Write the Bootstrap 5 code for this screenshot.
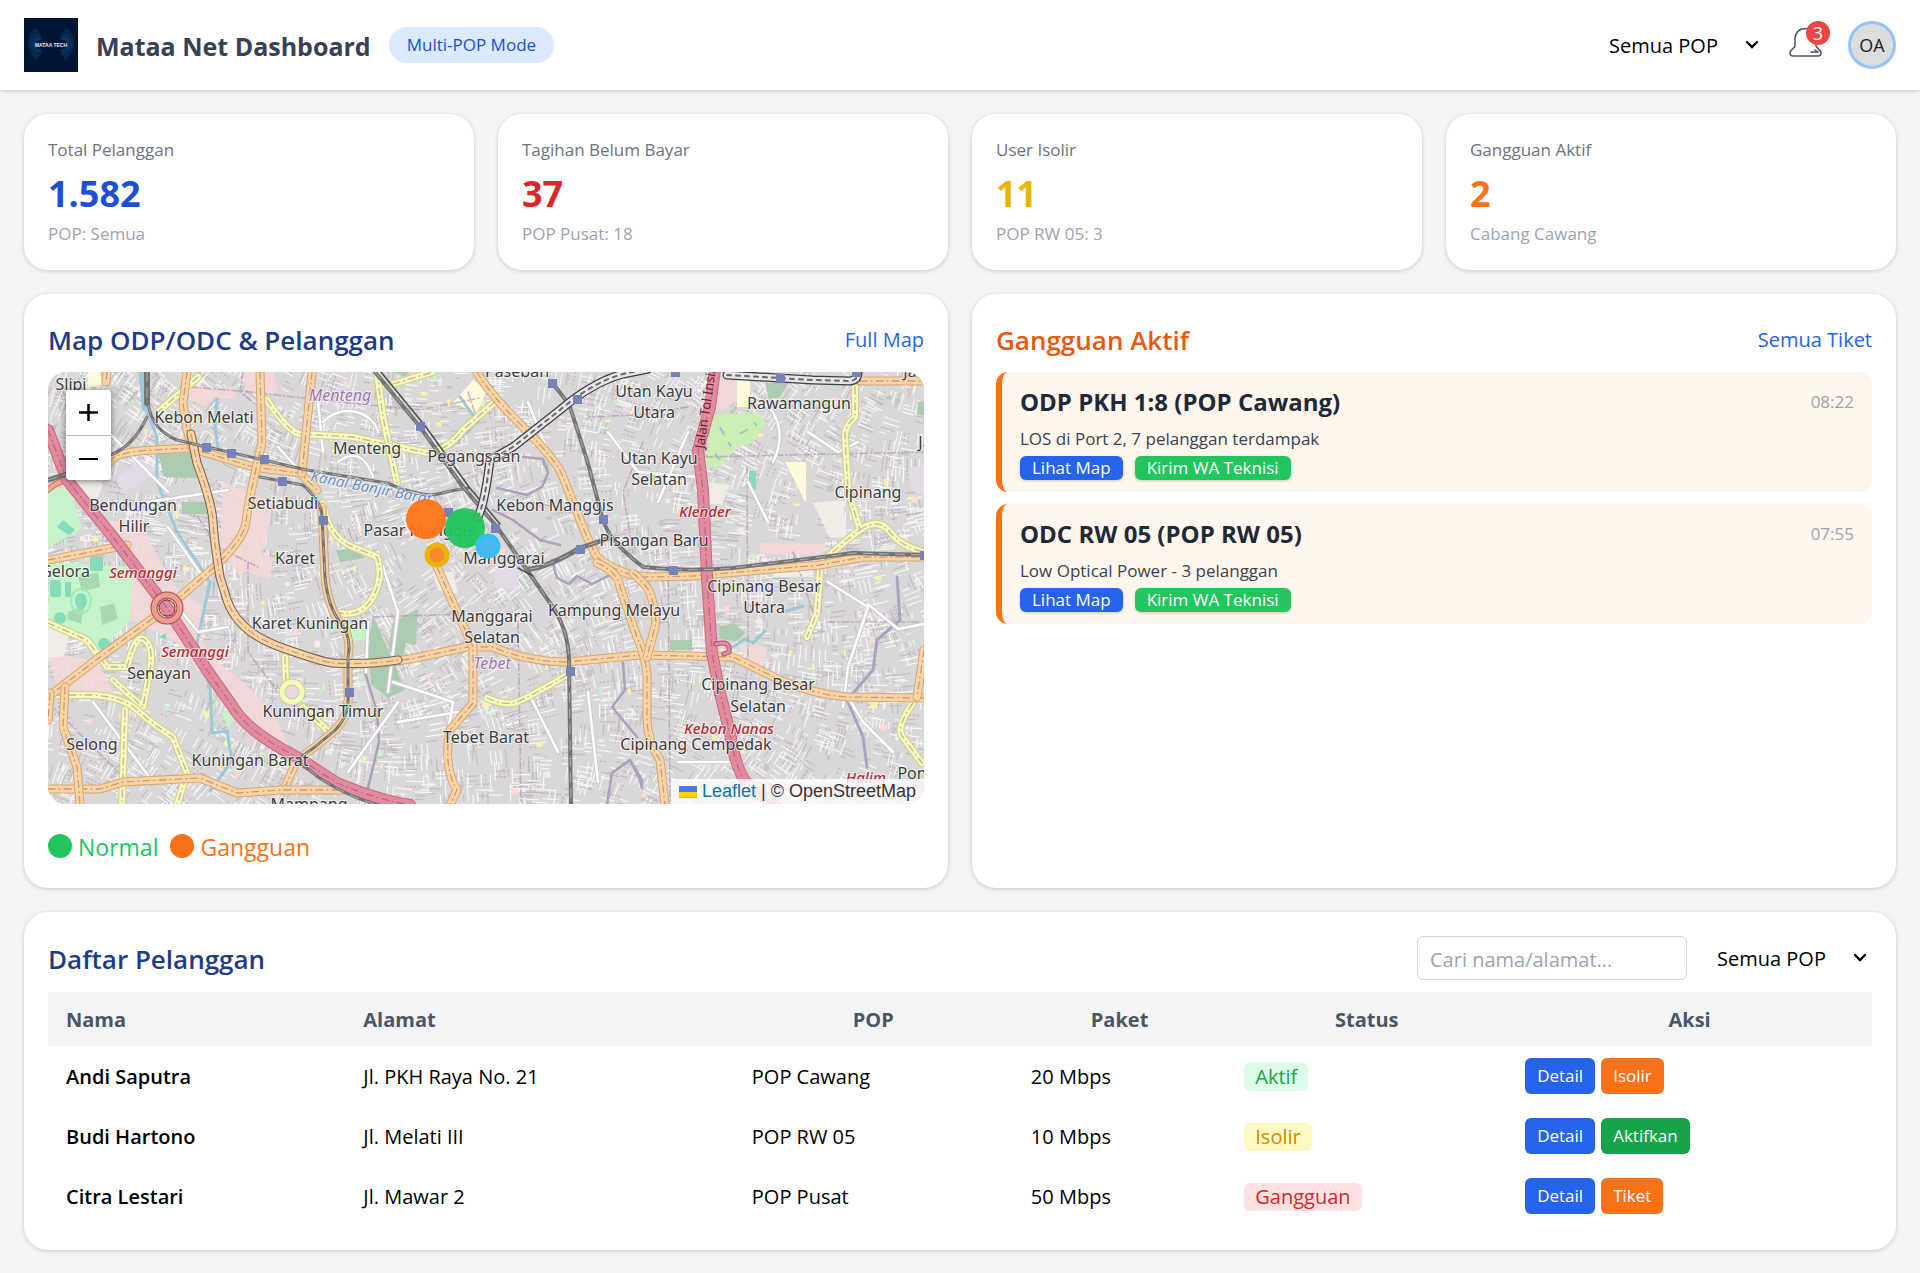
<!DOCTYPE html>
<html lang="id">
<head>
<meta charset="utf-8">
<meta name="viewport" content="width=device-width, initial-scale=1">
<title>Mataa Net Dashboard</title>
<link href="https://cdn.jsdelivr.net/npm/bootstrap@5.3.0/dist/css/bootstrap.min.css" rel="stylesheet">
<style>
  body { background: #f3f4f6; color: #000; font-family: "Open Sans", "Noto Sans", sans-serif; font-size: 20px; line-height: 30px; }
  .topbar { background: #fff; box-shadow: 0 1px 4px rgba(0,0,0,.2); padding: 18px 24px; min-height: 90px; position: relative; }
  .brand { gap: 18px; }
  .brand-title { font-size: 25px; font-weight: 700; line-height: 36px; color: #374151; padding-top: 2px; }
  .mode-pill { background: #dbeafe; color: #1d4ed8; font-size: 17px; line-height: 24px; padding: 6px 18px; border-radius: 18px; }
  .pop-select { appearance: none; border: 0; width: 173px; height: 44px; padding: 2px 30px 0 18px; color: #000; border-radius: 6px; font-size: 20px;
    background: transparent url("data:image/svg+xml,%3Csvg xmlns='http://www.w3.org/2000/svg' viewBox='0 0 14 10'%3E%3Cpath d='M2 2l5 5 5-5' fill='none' stroke='%23000' stroke-width='2.4' stroke-linecap='round'/%3E%3C/svg%3E") no-repeat right 5px center / 14px 10px; }
  .bell-btn { border: 0; background: none; padding: 0; width: 36px; height: 36px; position: relative; }
  .bell-btn svg { display: block; }
  .bell-count { position: absolute; top: -6px; right: -6px; width: 24px; height: 24px; border-radius: 50%; background: #ef4444; color: #fff; font-size: 18px; line-height: 25px; text-align: center; }
  .avatar { width: 48px; height: 48px; border: 3px solid #93c5fd; border-radius: 50%; background: #ddd; color: #222; font-size: 18px; line-height: 42px; text-align: center; }
  .page-main { padding: 24px; display: grid; gap: 24px; }
  .panel { background: #fff; border-radius: 24px; box-shadow: 0 1px 4px rgba(0,0,0,.18); padding: 24px; }
  .stats { --bs-gutter-x: 24px; --bs-gutter-y: 24px; }
  .stat-label, .stat-note { font-size: 17px; line-height: 24px; color: #6b7280; }
  .stat-note { color: #9ca3af; }
  .stat-value { font-size: 36px; line-height: 48px; font-weight: 700; margin: 8px 0 4px; }
  .panel-head { margin-bottom: 12px; }
  .panel-title { font-size: 26px; line-height: 40px; font-weight: 600; margin: 0; padding-top: 2px; }
  .panel-link { color: #2563eb; text-decoration: none; padding-top: 2px; }
  .c-navy { color: #1e3a8a; } .c-blue { color: #1d4ed8; } .c-red { color: #dc2626; } .c-yellow { color: #eab308; } .c-orange { color: #f97316; } .c-rust { color: #ea580c; } .c-green { color: #22c55e; }
  .map-box { position: relative; height: 432px; border-radius: 18px; overflow: hidden; background: #ddd; }
  .map-box > svg { display: block; width: 100%; height: 100%; }
  .zoom-ctl { position: absolute; left: 18px; top: 18px; width: 45px; border-radius: 4px; overflow: hidden; box-shadow: 0 1px 7px rgba(0,0,0,.5); }
  .zoom-ctl button { display: block; width: 45px; height: 45px; border: 0; padding: 13px; background: #fff; }
  .zoom-ctl button + button { border-top: 1px solid #bbb; }
  .zoom-ctl svg { display: block; }
  .attrib { position: absolute; right: 0; bottom: 0; background: rgba(255,255,255,.8); padding: 0 8px; font: 18px/25px "Liberation Sans", sans-serif; color: #333; }
  .attrib a { color: #0078a8; text-decoration: none; }
  .legend { font-size: 23px; line-height: 36px; gap: 12px; }
  .legend-name { padding-top: 2px; line-height: 34px; }
  .dot { width: 24px; height: 24px; border-radius: 50%; background: currentColor; margin: 0 6px 0 0; }
  .ticket-list, .tools { gap: 12px; }
  .ticket { background: #fff7ed; border-left: 6px solid #f97316; border-radius: 12px; padding: 12px 18px; }
  .ticket-title { font-size: 24px; line-height: 36px; font-weight: 700; color: #1f2937; margin: 0; }
  .ticket-text { font-size: 17px; line-height: 34px; padding-top: 2px; color: #374151; }
  .ticket-time { font-size: 17px; line-height: 36px; color: #9ca3af; }
  .tag-btn { border: 0; border-radius: 6px; color: #fff; font-size: 17px; line-height: 24px; padding: 0 12px; box-shadow: 0 1px 3px rgba(0,0,0,.2); }
  .act-btn { border: 0; border-radius: 6px; color: #fff; font-size: 17px; line-height: 24px; padding: 6px 12px; }
  .b-blue { background: #2563eb; } .b-green { background: #22c55e; } .b-orange { background: #f97316; } .b-leaf { background: #16a34a; }
  .search-box { width: 270px; height: 44px; border: 1px solid #d1d5db; border-radius: 6px; padding: 2px 12px 0; font-size: 20px; }
  .search-box::placeholder { color: #9ca3af; }
  .cust { width: 100%; table-layout: fixed; }
  .cust th { background: #f3f4f6; color: #4b5563; font-weight: 700; height: 54px; padding: 2px 18px 0; }
  .cust td { height: 60px; padding: 2px 18px 0; }
  .cust td.td-acts { padding-top: 0; }
  .cust .w1 { width: 16.3%; } .cust .w2 { width: 21.3%; } .cust .w3 { width: 15.3%; } .cust .w4 { width: 11.7%; } .cust .w5 { width: 15.4%; } .cust .w6 { width: 20%; }
  .acts { gap: 6px; }
  .state { display: inline-block; line-height: 28px; border-radius: 6px; padding: 0 11px; }
  .s-ok { background: #dcfce7; color: #16a34a; } .s-iso { background: #fef9c3; color: #ca8a04; } .s-bad { background: #fee2e2; color: #dc2626; }
  .mroad { fill: none; stroke-linejoin: round; stroke-linecap: round; }
  .lbl { font-family: "Noto Sans", sans-serif; font-size: 16px; fill: #3c3c3c; text-anchor: middle; paint-order: stroke; stroke: rgba(255,255,255,.65); stroke-width: 2px; stroke-linejoin: round; }
  .lbl .ramp { fill: #b52b35; font-style: italic; font-size: 15px; font-weight: 500; }
  .lbl .dist { fill: #a077ab; font-style: italic; }
  .lbl .wat { fill: #6b8fc4; font-style: italic; font-size: 15px; text-anchor: start; }
</style>
<script src="https://cdn.jsdelivr.net/npm/bootstrap@5.3.0/dist/js/bootstrap.bundle.min.js" defer></script>
</head>
<body>
<header class="topbar d-flex align-items-center justify-content-between">
  <div class="d-flex align-items-center brand">
    <svg class="flex-shrink-0" width="54" height="54" viewBox="0 0 54 54" role="img" aria-label="Mataa Tech">
      <defs>
        <pattern id="lgDots" width="2" height="2" patternUnits="userSpaceOnUse"><circle cx="1" cy="1" r=".6" fill="#127fb0"/></pattern>
        <radialGradient id="lgGlow"><stop offset="0" stop-color="#0b4fa8" stop-opacity=".8"/><stop offset="1" stop-color="#001433" stop-opacity="0"/></radialGradient>
      </defs>
      <rect width="54" height="54" fill="#001433"/>
      <ellipse cx="14" cy="26" rx="10" ry="13" fill="url(#lgGlow)"/><ellipse cx="41" cy="26" rx="10" ry="13" fill="url(#lgGlow)"/>
      <path d="M10 10h3l4 8v18l-5 7-5-7-3-8 1-10zM44 10h-3l-4 8v18l5 7 5-7 3-8-1-10z" fill="url(#lgDots)" opacity=".75"/>
      <rect x="12" y="22" width="31" height="9" rx="3" fill="#001433" opacity=".85"/>
      <text x="27" y="29" text-anchor="middle" font-family="Liberation Sans, sans-serif" font-weight="700" font-size="5" fill="#e4ecf8">MATAA TECH</text>
    </svg>
    <h1 class="brand-title mb-0">Mataa Net Dashboard</h1>
    <span class="mode-pill">Multi-POP Mode</span>
  </div>
  <div class="d-flex align-items-center gap-4">
    <select class="pop-select" aria-label="Pilih POP"><option>Semua POP</option></select>
    <button class="bell-btn" type="button" aria-label="Notifikasi">
      <svg width="36" height="36" viewBox="0 0 36 36" fill="none" stroke="#4b5563" stroke-width="1.5" stroke-linecap="round" stroke-linejoin="round"><path d="M7 18.500V12C7 6 11 1.500 17.500 1.500S28 6 28 12v7c0 1.500 5 4 5 7 0 2-1 3-3 3H5c-2 0-3-1-3-3 0-3.500 5-4.500 5-7.500zM23 25h7M27 23l3 2"/></svg>
      <span class="bell-count">3</span>
    </button>
    <div class="avatar">OA</div>
  </div>
</header>

<main class="page-main">
  <section class="row stats">
    <div class="col-12 col-sm-6 col-lg-3"><div class="panel"><div class="stat-label">Total Pelanggan</div><div class="stat-value c-blue">1.582</div><div class="stat-note">POP: Semua</div></div></div>
    <div class="col-12 col-sm-6 col-lg-3"><div class="panel"><div class="stat-label">Tagihan Belum Bayar</div><div class="stat-value c-red">37</div><div class="stat-note">POP Pusat: 18</div></div></div>
    <div class="col-12 col-sm-6 col-lg-3"><div class="panel"><div class="stat-label">User Isolir</div><div class="stat-value c-yellow">11</div><div class="stat-note">POP RW 05: 3</div></div></div>
    <div class="col-12 col-sm-6 col-lg-3"><div class="panel"><div class="stat-label">Gangguan Aktif</div><div class="stat-value c-orange">2</div><div class="stat-note">Cabang Cawang</div></div></div>
  </section>

  <section class="row stats">
    <div class="col-12 col-lg-6">
      <div class="panel h-100">
        <div class="panel-head d-flex justify-content-between align-items-center">
          <h2 class="panel-title c-navy">Map ODP/ODC &amp; Pelanggan</h2>
          <a class="panel-link" href="#map">Full Map</a>
        </div>
        <div class="map-box" id="map">
          <svg viewBox="0 0 876 432" preserveAspectRatio="xMidYMid slice" role="img" aria-label="Peta Manggarai dan sekitarnya">
            <rect width="876" height="432" fill="#d9d7d8"/>
            <g id="blocks"></g>
            <g fill="#f3d9d8" opacity=".9">
              <path d="M85 190L108 182 128 215 155 235 150 265 170 290 195 310 225 340 240 372 215 372 170 320 128 270 100 255 82 248z"/>
              <path d="M0 280L50 290 70 330 10 318zM175 110l50 20-8 45-25 30-20-30zM60 150l30-5 20 40-25 5z"/>
              <path d="M142 12l25 6 22-5-2 15-22-3-8 10-15-8zM195 0h30l5 20-18 5-15-8zM712 171l67 1-7 11-60-1zM689 271l30 4-4 20-12-5zM665 6h25v22l-15 10-12-3zM195 180l30 5-3 22-25-8z"/>
            </g>
            <g fill="#f0ece6"><path d="M765 131l30-3 4 37-17 1zM725 205h40v-14h-40zM660 110l22 3-8 18-14 2zM385 200l20 0 5 22-20-4zM30 100l25 12-8 22-27-8zM0 250l22 12-6 22-16 2z"/></g>
            <g fill="#c5f3ca"><path d="M2 190L85 195 82 248 52 278 0 248zM0 115l22 2 12 40-34 18zM300 255l18-2 2 14-20 3zM173 340l14 2-6 14z"/></g>
            <g fill="#a9d9ae"><path d="M30 205l20-5 2 15-18 4zM52 235l14-4 4 16-16 6zM20 240l16-6-3 18-14-5z"/></g>
            <g fill="#84dcbb"><rect x="2" y="208" width="11" height="17" rx="3"/><rect x="17" y="210" width="6" height="15"/><circle cx="12" cy="246" r="6"/><circle cx="56" cy="272" r="6"/><rect x="42" y="185" width="13" height="14"/><path d="M701 99h7v18h-7zM15 148l12 10-6 5-12-8zM110 265l8-4 0 6z"/></g>
            <ellipse cx="33" cy="229" rx="6" ry="8" fill="#84dcbb"/>
            <ellipse cx="33" cy="229" rx="10" ry="12" fill="none" stroke="#a4e8bd" stroke-width="2"/>
            <g fill="#abccb0"><path d="M110 81l32-1 10 26-36-1zM134 130h30v12h-30zM325 243l20 46 12 29-17 8-17-14-3-40zM345 250l25-13-2 36-10-2-3 15-15-7zM717 11h23l-8 14-11 2zM671 255l15-4 11 10-8 8-17-2zM622 268h22v10h-22zM345 0l15 0-3 5zM288 178l25-2 3 10-24 4zM870 30h8v14l-9-2z"/></g>
            <path fill="#cdeeb2" d="M665 42l47-1 5 10-12 20-16 4-17 20-15 0z"/>
            <path d="M672 55l4 8M692 62l8-5M667 82l5 6M680 70l3 5M706 50l3 4" stroke="#8ccbd8" stroke-width="2"/>
            <g fill="#fdfbdc"><path d="M689 6h13v29h-13zM737 90l21 0v41zM405 31l20-23 14 10-10 23zM40 0l12 0 2 12-14 4z"/></g>
            <g fill="#e4d9e6"><path d="M66 105l18-8 12 12-20 12zM83 94l10-6 14 10-12 9zM860 96l16-3v30l-12-4zM447 196l22-1v22l-22-1z"/></g>
            <g class="mroad" stroke="#9cc8d8" stroke-width="3">
              <path stroke-width="7" d="M94 0l3 35"/><path d="M97 35l12 30v45l20 50 33 50-13 61 13 44 2 46 15-2 5 30-22 30M170 75l-3-18 2-30M849 205l3 43-23 20-4 30-26 30 16 37 4 30M685 275l12-8 8 4 12-12M412 25l14 20M735 240l20-6"/>
            </g>
            <g class="mroad" stroke="#aaa1bd" stroke-width="2.500">
              <path d="M475 85l20 2 5 14-6 14-15 8-30-7M445 138l20 10 27 20 20 5M575 291l2 27-13 17 25 30M559 433l5-32 18-13 10 20 2 8 0-8-12-20M504 188l5 18 12 6 8-8 15 8 20-10M317 300l12 40 2 30-12 50M849 205l3 43-23 20-4 30-26 30 16 37 4 30"/>
            </g>
            <g class="mroad" stroke="#b79cb8" stroke-width="1.600" stroke-dasharray="7 3 1 3" opacity=".75">
              <path d="M142 15l60 5 90 10 80 8 60-12M195 0l-3 20 20 15M640 35l-50 8-50 2M658 85l80-2 138-3M699 95l1 200M595 70l-20 50 10 60M200 190v90l30 40M325 245l90-3M470 250l3 180M620 180l2 250M745 180l20 60M480 130l60 10M0 330l40 40 30 30M150 145l20 30 40 20M780 250h90M420 20l10 30-20 20"/>
            </g>
            <g id="roads"></g>
            <g id="stations" fill="#7783b8"></g>
            <g class="lbl">
              <text x="23" y="18">Slipi</text><text x="156" y="51">Kebon Melati</text><text class="dist" x="292" y="29">Menteng</text><text x="319" y="82">Menteng</text><text x="426" y="90">Pegangsaan</text><text x="469" y="5">Paseban</text>
              <text class="wat" transform="translate(262 109) rotate(11)">Kanal Banjir Barat</text>
              <text x="85" y="139">Bendungan</text><text x="86" y="160">Hilir</text><text x="235" y="137">Setiabudi</text><text x="371" y="164">Pasar Manggis</text><text x="247" y="192">Karet</text><text x="456" y="192">Manggarai</text><text x="507" y="139">Kebon Manggis</text>
              <text x="606" y="25">Utan Kayu</text><text x="606" y="46">Utara</text><text x="611" y="92">Utan Kayu</text><text x="611" y="113">Selatan</text><text x="751" y="37">Rawamangun</text><text x="862" y="5">Ja</text><text x="877" y="76">Ja</text><text x="820" y="126">Cipinang</text><text class="ramp" x="657" y="145">Klender</text><text x="606" y="174">Pisangan Baru</text>
              <text x="17" y="205">Gelora</text><text class="ramp" x="95" y="206">Semanggi</text><text class="ramp" x="147" y="285">Semanggi</text><text x="111" y="307">Senayan</text><text x="44" y="378">Selong</text><text x="262" y="257">Karet Kuningan</text><text x="275" y="345">Kuningan Timur</text><text x="202" y="394">Kuningan Barat</text><text x="261" y="438">Mampang</text>
              <text x="444" y="250">Manggarai</text><text x="444" y="271">Selatan</text><text class="dist" x="444" y="297">Tebet</text><text x="438" y="371">Tebet Barat</text><text x="566" y="244">Kampung Melayu</text><text x="716" y="220">Cipinang Besar</text><text x="716" y="241">Utara</text><text x="710" y="318">Cipinang Besar</text><text x="710" y="340">Selatan</text><text class="ramp" x="681" y="362">Kebon Nanas</text><text x="648" y="378">Cipinang Cempedak</text><text class="ramp" x="818" y="411">Halim</text><text x="864" y="407">Pon</text>
            </g>
            <path id="tolPath" d="M656 77L661 43 675 -50" fill="none"/>
            <text font-family="Noto Sans, sans-serif" font-size="13" fill="#6b2433"><textPath href="#tolPath">Jalan Tol Insinyur</textPath></text>
            <circle cx="378" cy="147" r="20" fill="#ff7518" opacity=".95"/>
            <circle cx="417" cy="156" r="20" fill="#22c55e" opacity=".95"/>
            <circle cx="389" cy="183" r="10" fill="#f98a25" stroke="#eab308" stroke-width="5"/>
            <circle cx="440" cy="174" r="10" fill="#4fb9ee" stroke="#38bdf8" stroke-width="5"/>
          </svg>
          <div class="zoom-ctl">
            <button type="button" aria-label="Perbesar"><svg width="19" height="19" viewBox="0 0 19 19" stroke="#000" stroke-width="2.500"><path d="M0 9.500h19M9.500 1v17"/></svg></button>
            <button type="button" aria-label="Perkecil"><svg width="19" height="19" viewBox="0 0 19 19" stroke="#000" stroke-width="2"><path d="M0 10h19"/></svg></button>
          </div>
          <div class="attrib"><a href="#leaflet"><svg width="18" height="12" viewBox="0 0 18 12" aria-hidden="true"><path fill="#4c7be1" d="M0 0h18v6H0z"/><path fill="#ffd500" d="M0 6h18v5H0z"/><path fill="#e0bc00" d="M0 11h18v1H0z"/></svg> Leaflet</a> | © OpenStreetMap</div>
        </div>
        <div class="legend d-flex mt-4">
          <span class="d-flex align-items-center c-green"><span class="dot"></span><span class="legend-name">Normal</span></span>
          <span class="d-flex align-items-center c-orange"><span class="dot"></span><span class="legend-name">Gangguan</span></span>
        </div>
      </div>
    </div>
    <div class="col-12 col-lg-6">
      <div class="panel h-100">
        <div class="panel-head d-flex justify-content-between align-items-center">
          <h2 class="panel-title c-rust">Gangguan Aktif</h2>
          <a class="panel-link" href="#tiket">Semua Tiket</a>
        </div>
        <div class="d-grid ticket-list" id="tiket">
          <article class="ticket">
            <div class="d-flex justify-content-between"><h3 class="ticket-title">ODP PKH 1:8 (POP Cawang)</h3><span class="ticket-time">08:22</span></div>
            <div class="ticket-text">LOS di Port 2, 7 pelanggan terdampak</div>
            <div class="d-flex tools"><button type="button" class="tag-btn b-blue">Lihat Map</button><button type="button" class="tag-btn b-green">Kirim WA Teknisi</button></div>
          </article>
          <article class="ticket">
            <div class="d-flex justify-content-between"><h3 class="ticket-title">ODC RW 05 (POP RW 05)</h3><span class="ticket-time">07:55</span></div>
            <div class="ticket-text">Low Optical Power - 3 pelanggan</div>
            <div class="d-flex tools"><button type="button" class="tag-btn b-blue">Lihat Map</button><button type="button" class="tag-btn b-green">Kirim WA Teknisi</button></div>
          </article>
        </div>
      </div>
    </div>
  </section>

  <section class="panel">
    <div class="panel-head d-flex flex-wrap justify-content-between align-items-center">
      <h2 class="panel-title c-navy">Daftar Pelanggan</h2>
      <div class="d-flex tools">
        <input class="search-box" type="text" placeholder="Cari nama/alamat..." aria-label="Cari nama/alamat">
        <select class="pop-select" aria-label="Filter POP"><option>Semua POP</option></select>
      </div>
    </div>
    <table class="cust">
      <thead><tr><th class="w1">Nama</th><th class="w2">Alamat</th><th class="w3 text-center">POP</th><th class="w4 text-center">Paket</th><th class="w5 text-center">Status</th><th class="w6 text-center">Aksi</th></tr></thead>
      <tbody>
        <tr><td class="fw-semibold">Andi Saputra</td><td>Jl. PKH Raya No. 21</td><td>POP Cawang</td><td>20 Mbps</td><td><span class="state s-ok">Aktif</span></td><td class="td-acts"><div class="d-flex acts"><button type="button" class="act-btn b-blue">Detail</button><button type="button" class="act-btn b-orange">Isolir</button></div></td></tr>
        <tr><td class="fw-semibold">Budi Hartono</td><td>Jl. Melati III</td><td>POP RW 05</td><td>10 Mbps</td><td><span class="state s-iso">Isolir</span></td><td class="td-acts"><div class="d-flex acts"><button type="button" class="act-btn b-blue">Detail</button><button type="button" class="act-btn b-leaf">Aktifkan</button></div></td></tr>
        <tr><td class="fw-semibold">Citra Lestari</td><td>Jl. Mawar 2</td><td>POP Pusat</td><td>50 Mbps</td><td><span class="state s-bad">Gangguan</span></td><td class="td-acts"><div class="d-flex acts"><button type="button" class="act-btn b-blue">Detail</button><button type="button" class="act-btn b-orange">Tiket</button></div></td></tr>
      </tbody>
    </table>
  </section>
</main>

<script>
  // Street map layers: neighbourhood streets, main roads, railways and stations.
  const NS = 'http://www.w3.org/2000/svg';
  const add = (id, tag, attrs) => {
    const el = document.createElementNS(NS, tag);
    for (const k in attrs) el.setAttribute(k, attrs[k]);
    document.getElementById(id).appendChild(el);
  };
  let seed = 7;
  const rnd = () => (seed = (seed * 16807) % 2147483647) / 2147483647;

  let thin = '', dark = '', lilac = '';
  for (let i = 0; i < 2300; i++) {
    const x = rnd() * 900 - 10, y = rnd() * 450 - 10;
    const a = (Math.sin(x / 90) + Math.cos(y / 70)) * 0.35 + (rnd() < 0.5 ? 0 : Math.PI / 2);
    const c = Math.cos(a), s = Math.sin(a), n = 2 + Math.floor(rnd() * 3), gap = 3.5 + rnd() * 2.5;
    for (let j = 0; j < n; j++) {
      const len = 5 + rnd() * 13, px = x - s * gap * j, py = y + c * gap * j;
      const seg = `M${px.toFixed(1)} ${py.toFixed(1)}l${(c * len).toFixed(1)} ${(s * len).toFixed(1)}`;
      if (rnd() < 0.1) lilac += seg; else if (rnd() < 0.35) dark += seg; else thin += seg;
    }
  }
  add('blocks', 'path', { d: dark, stroke: '#c2bec2', 'stroke-width': 1.2, fill: 'none' });
  add('blocks', 'path', { d: thin, stroke: '#fbfafb', 'stroke-width': 1.2, fill: 'none', opacity: .85 });
  add('blocks', 'path', { d: lilac, stroke: '#c3aac6', 'stroke-width': 1.1, 'stroke-dasharray': '2 2', fill: 'none' });
  const tints = ['#f7f3a8', '#c9f0cf', '#f0ece6', '#ffd9d4', '#c8c6c8', '#ded2e0'];
  for (let i = 0; i < 260; i++) {
    add('blocks', 'rect', { x: (rnd() * 876).toFixed(1), y: (rnd() * 432).toFixed(1), width: (2 + rnd() * 5).toFixed(1), height: (2 + rnd() * 5).toFixed(1), fill: tints[i % 6] });
  }

  const road = (d, casing, fill, w, dash) => {
    add('roads', 'path', { d, class: 'mroad', stroke: casing, 'stroke-width': w + 2 });
    add('roads', 'path', { d, class: 'mroad', stroke: fill, 'stroke-width': w });
    if (dash) add('roads', 'path', { d, class: 'mroad', stroke: dash, 'stroke-width': 1.3, 'stroke-dasharray': '7 4 1 4' });
  };
  const local = [
    'M320 250L318 300M345 310l60 20-10 60M700 110l20 40M760 60l30 20 20-10M780 210l40 25-20 60-5 40M820 232l30 25 26-5M800 325l15 25 30 30M45 330l60 80M480 320l30 60M540 320l10 90M630 390h60M640 60l-30 70M560 60l30 40 60 5M480 30l20 50M60 60l60 60M100 130l80-12M130 235l20 25 30-5M155 205l-35-50M330 180l20 60-10 80M350 350l60-10M300 400l50-70M270 30l5 50M230 75l20 22M275 50c20-20 50-10 55 10M290 90c20-15 30 0 35 15M715 30c20 15 20 40 10 60'
  ];
  local.forEach(d => road(d, '#cfcbcf', '#fff', 2.5));
  const yellow = [
    'M219 28Q240 60 252 62L305 65 379 81Q400 78 415 58L449 28', 'M329 0L335 45 349 111', 'M345 12L385 0', 'M275 131Q280 165 305 175T329 185Q336 205 325 225T292 241',
    'M807 15V45Q796 55 797 65L800 118 812 158Q795 170 769 195M812 158Q830 145 842 160T876 180', 'M772 198L769 241 759 265', 'M0 251L39 268 59 295 79 295Q88 260 97 268T102 298L95 335 65 308',
    'M5 323H45Q75 325 89 338T125 365L139 401 129 433M77 338L74 433', 'M237 285L238 308M255 335L279 358', 'M439 326Q455 333 465 331T519 303', 'M865 331Q848 355 854 364L874 391', 'M150 5L110 40'
  ];
  yellow.forEach(d => road(d, '#cfd08c', '#f5f7bd', 6, '#c9b39c'));
  add('roads', 'circle', { cx: 244, cy: 320, r: 10, fill: '#ead9dc', stroke: '#cfd08c', 'stroke-width': 7 });
  add('roads', 'circle', { cx: 244, cy: 320, r: 10, fill: 'none', stroke: '#f5f7bd', 'stroke-width': 5 });
  const orange = [
    'M0 188L79 173', 'M59 0L58 10', 'M62 90Q65 80 105 78L142 76 205 95 252 101 269 118',
    'M139 0L135 31 139 58 149 91Q164 131 165 150T172 205L179 228Q190 260 232 275T285 291Q330 294 372 285L419 275H445Q480 290 519 290L592 283 685 285 732 308Q765 322 799 325L876 326',
    'M212 0L214 71Q200 130 198 150T155 205L119 236 52 285 0 325', 'M264 0L259 51 254 101',
    'M274 135L277 205Q280 235 292 250T300 285V321Q302 345 285 360T249 388L237 415', 'M429 0Q440 20 475 55T515 105L539 165 549 185Q570 203 600 205L645 204 772 193 815 185H876',
    'M549 191Q570 200 572 215L589 265Q600 290 599 310V348Q600 370 612 388L617 433', 'M585 201Q600 215 602 221 610 245 607 255L599 285',
    'M0 417H52L75 410 152 406 189 421 232 418H299', 'M17 315L15 355 29 395 32 433M2 321L0 348', 'M389 195L405 231 425 275V331L402 358Q395 395 409 418L402 433', 'M812 9H876', 'M876 278L869 325'
  ];
  orange.forEach(d => road(d, '#d0aa7a', '#fbd3a0', 7, '#c69b86'));
  const viaduct = 'M143 62L149 91Q164 131 165 150T172 205L179 228Q190 260 232 275T285 291Q320 293 350 288';
  add('roads', 'path', { d: viaduct, class: 'mroad', stroke: '#6d665f', 'stroke-width': 9 });
  add('roads', 'path', { d: viaduct, class: 'mroad', stroke: '#fbd3a0', 'stroke-width': 7 });
  add('roads', 'path', { d: viaduct, class: 'mroad', stroke: '#c69b86', 'stroke-width': 1.3, 'stroke-dasharray': '7 4 1 4' });

  road('M0 118Q10 108 30 104', '#d46a62', '#f5a48e', 4);
  const toll = ['M0 58L19 108 65 165 119 236 159 298 185 335Q200 360 249 385L289 411Q330 428 362 433', 'M667 -2L662 35 650 78 655 118 659 205 664 281 672 321 682 361Q688 400 700 412L730 436'];
  toll.forEach(d => road(d, '#c96a82', '#e48a9d', 10, '#b96b85'));
  road('M700 412Q760 420 876 416', '#e5a5b1', '#eab3bd', 4);
  add('roads', 'circle', { cx: 119, cy: 236, r: 13, fill: 'none', stroke: '#a2544b', 'stroke-width': 7 });
  add('roads', 'circle', { cx: 119, cy: 236, r: 13, fill: 'none', stroke: '#ee9c90', 'stroke-width': 5 });
  add('roads', 'circle', { cx: 119, cy: 236, r: 8, fill: 'none', stroke: '#7d3f4c', 'stroke-width': 1 });
  road('M668 272Q683 268 681 280L676 282', '#b9506c', '#e48a9d', 3);

  const rails = [
    ['M99 0L100 31Q104 58 129 68L159 75 259 98 339 111Q375 126 390 122T420 116', 3], ['M99 0V31', 6], ['M99 45Q85 75 62 83', 3], ['M0 108L25 100', 5], ['M212 105L255 113Q274 130 274 145L277 205Q280 235 292 250T300 285V321Q302 345 285 360T249 388L270 405Q300 425 330 433', 3],
    ['M327 0L372 55 415 115 449 155 479 198 502 231Q520 255 521 288L523 433', 4], ['M504 11Q520 30 522 35L539 88 555 148Q562 170 595 195 640 200 685 196L775 185 805 181 876 183', 4], ['M482 197Q500 195 532 176L562 166', 5]
  ];
  rails.forEach(([d, w]) => {
    add('roads', 'path', { d, class: 'mroad', stroke: '#747474', 'stroke-width': w });
    add('roads', 'path', { d, class: 'mroad', stroke: '#b0b0b0', 'stroke-width': 1, 'stroke-dasharray': '9 7' });
  });
  add('roads', 'path', { d: 'M333 0L378 55 421 115 452 152M470 196l15 8', class: 'mroad', stroke: '#4d4d4d', 'stroke-width': 1.5 });
  ['M430 145Q437 130 442 88L465 75 512 38Q545 10 575 2L600 -3', 'M679 3L765 8 802 9Q811 8 810 -3'].forEach(d => {
    add('roads', 'path', { d, class: 'mroad', stroke: '#3e3e3e', 'stroke-width': 9 });
    add('roads', 'path', { d, class: 'mroad', stroke: '#e8e4e8', 'stroke-width': 6.5 });
    add('roads', 'path', { d, class: 'mroad', stroke: '#6d6570', 'stroke-width': 2, 'stroke-dasharray': '4 5' });
  });

  [[158,75],[183,81],[216,87],[234,109],[275,148],[372,54],[400,140],[447,156],[504,11],[529,27],[627,0],[732,6],[808,0],[555,147],[532,177],[625,198],[876,183],[301,320],[522,299]]
    .forEach(([x, y]) => add('stations', 'rect', { x: x - 4, y: y - 4, width: 9, height: 9 }));
</script>
</body>
</html>
